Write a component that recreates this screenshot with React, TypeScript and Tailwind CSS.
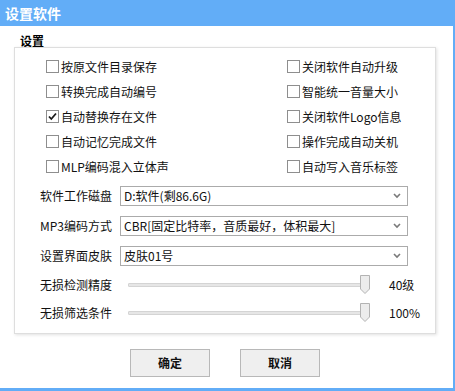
const FONT = { fontFamily: '"Noto Sans CJK SC", "Noto Sans", sans-serif' };

const leftItems = [
  { label: "按原文件目录保存", checked: false },
  { label: "转换完成自动编号", checked: false },
  { label: "自动替换存在文件", checked: true },
  { label: "自动记忆完成文件", checked: false },
  { label: "MLP编码混入立体声", checked: false },
];

const rightItems = [
  "关闭软件自动升级",
  "智能统一音量大小",
  "关闭软件Logo信息",
  "操作完成自动关机",
  "自动写入音乐标签",
];

const selects = [
  { label: "软件工作磁盘", value: "D:软件(剩86.6G)" },
  { label: "MP3编码方式", value: "CBR[固定比特率，音质最好，体积最大]" },
  { label: "设置界面皮肤", value: "皮肤01号" },
];

const sliders = [
  { label: "无损检测精度", value: "40级" },
  { label: "无损筛选条件", value: "100%" },
];

function Check({ label, checked }: { label: string; checked?: boolean }) {
  return (
    <div className="flex h-[25px] items-center">
      <span className="flex h-[13px] w-[13px] shrink-0 items-center justify-center border border-[#8e8e8e] bg-white">
        {checked && (
          <svg viewBox="0 0 11 11" className="h-[11px] w-[11px]">
            <path d="M2 5.5 L4.3 8 L9 2.5" fill="none" stroke="#1a1a1a" strokeWidth="1.8" />
          </svg>
        )}
      </span>
      <span className="ml-[2px] text-[12px] leading-[14px] text-[#111]">{label}</span>
    </div>
  );
}

function Chevron() {
  return (
    <svg viewBox="0 0 8 6" className="h-[6px] w-[8px]">
      <path d="M1 1 L4 4 L7 1" fill="none" stroke="#7a7a7a" strokeWidth="1.6" />
    </svg>
  );
}

export default function App() {
  return (
    <div className="flex h-[391px] w-[455px] flex-col bg-white" style={FONT}>
      <div className="flex h-[26px] shrink-0 items-center bg-[#62adf7] pl-[5px]">
        <span className="text-[14px] font-bold leading-[16px] text-white">设置软件</span>
      </div>
      <div className="flex flex-1 flex-col border-r-2 border-b-3 border-[#62adf7]">
        <div className="ml-[20px] mt-[9px] h-[12px] text-[12px] font-bold leading-[12px] text-black">设置</div>
        <div className="ml-[14px] mt-[0px] flex h-[287px] w-[422px] flex-col border border-[#dedede] shadow-[1px_1px_3px_rgba(0,0,0,0.12)]">
          <div className="mt-[6px] flex">
            <div className="ml-[31px] flex w-[241px] flex-col">
              {leftItems.map((it) => (
                <Check key={it.label} label={it.label} checked={it.checked} />
              ))}
            </div>
            <div className="flex flex-col">
              {rightItems.map((l) => (
                <Check key={l} label={l} />
              ))}
            </div>
          </div>
          <div className="mt-[2px] flex flex-col">
            {selects.map((s) => (
              <div key={s.label} className="flex h-[30px] items-center">
                <span className="ml-[25px] w-[80px] text-[12px] leading-[14px] text-[#111]">{s.label}</span>
                <div className="flex h-[20px] w-[288px] items-center justify-between border border-[#ababab] bg-white pl-[3px] pr-[6px]">
                  <span className="text-[12px] leading-[14px] text-[#111]">{s.value}</span>
                  <Chevron />
                </div>
              </div>
            ))}
          </div>
          <div className="flex flex-col">
            {sliders.map((s) => (
              <div key={s.label} className="flex h-[28px] items-center">
                <span className="ml-[25px] w-[88px] text-[12px] leading-[14px] text-[#111]">{s.label}</span>
                <div className="relative flex h-[20px] w-[242px] items-center">
                  <div className="h-[4px] w-full rounded-[1px] border border-[#d4d4d4] bg-[#e6e6e6]" />
                  <svg viewBox="0 0 10 19" className="absolute right-[0px] top-[0px] h-[19px] w-[10px]">
                    <path d="M0.5 0.5 H9.5 V14 L5 18.5 L0.5 14 Z" fill="#ececec" stroke="#b3b3b3" />
                  </svg>
                </div>
                <span className="ml-[19px] text-[12px] leading-[14px] text-[#111]">{s.value}</span>
              </div>
            ))}
          </div>
        </div>
        <div className="ml-[130px] mt-[15px] flex gap-[30px]">
          <button className="flex h-[28px] w-[80px] items-center justify-center border border-[#b8b8b8] bg-[#efefef] text-[12px] font-bold text-[#111]">
            确定
          </button>
          <button className="flex h-[28px] w-[80px] items-center justify-center border border-[#b8b8b8] bg-[#efefef] text-[12px] font-bold text-[#111]">
            取消
          </button>
        </div>
      </div>
    </div>
  );
}
